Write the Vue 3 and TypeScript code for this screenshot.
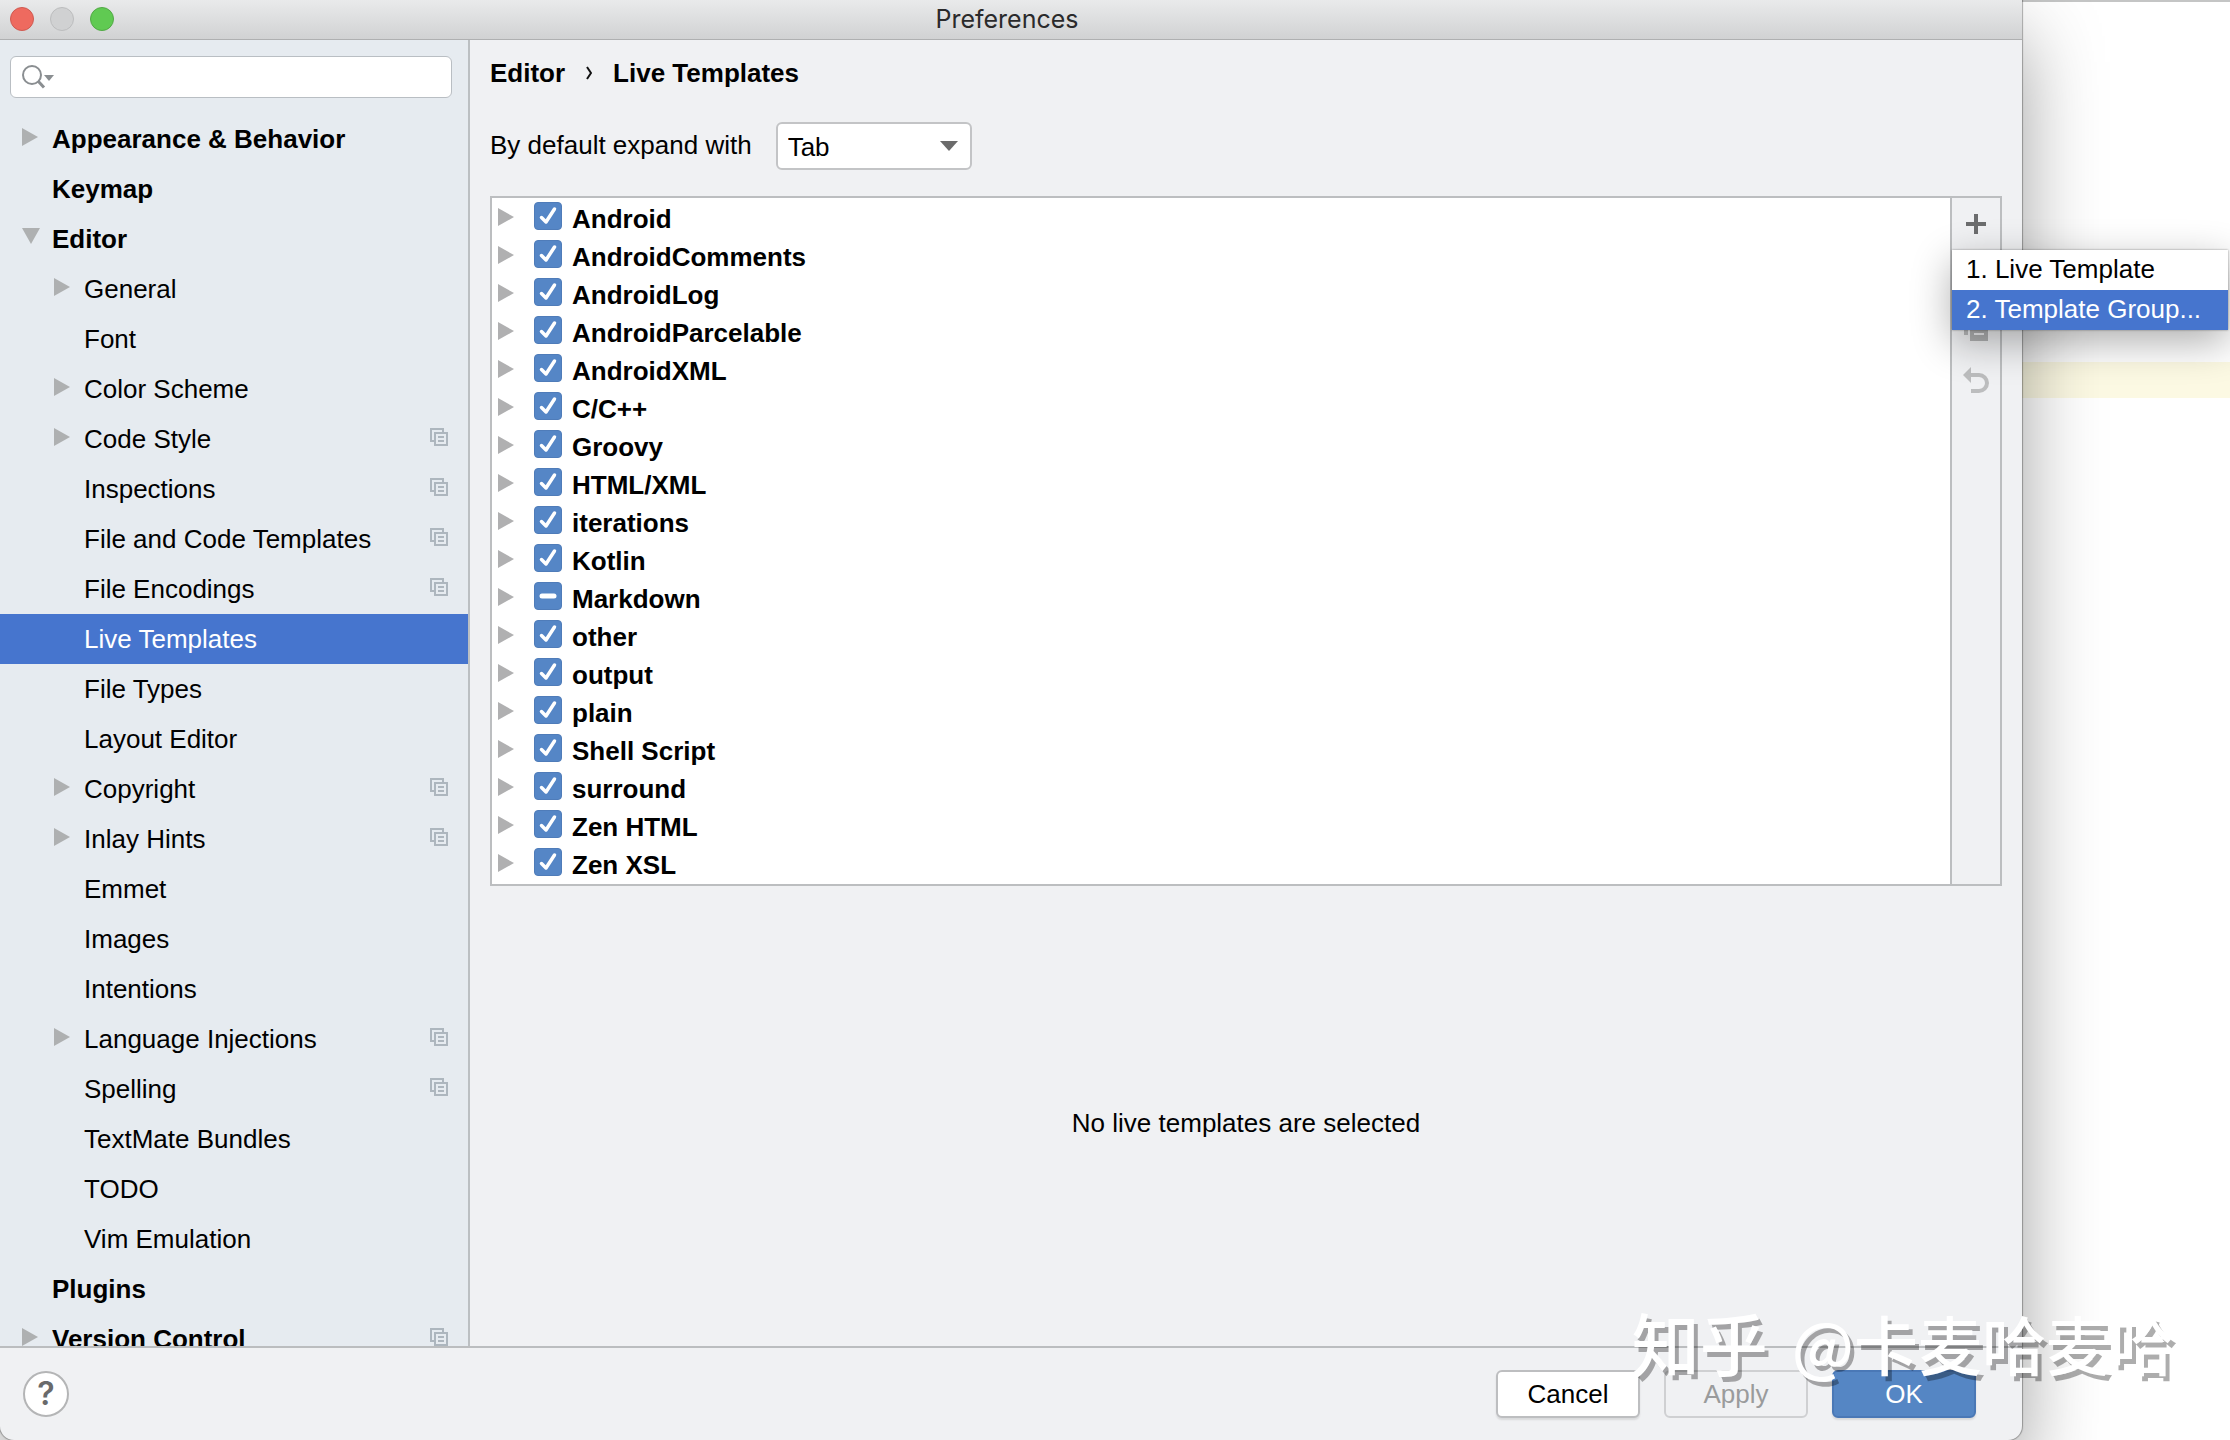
<script setup lang="ts">
import { ref } from 'vue'

interface NavItem {
  label: string
  depth: 0 | 1
  arrow?: 'right' | 'down'
  project?: boolean
}

interface TemplateGroup {
  name: string
  checked: boolean
  partial?: boolean
}

const navItems: NavItem[] = [
  { label: 'Appearance & Behavior', depth: 0, arrow: 'right' },
  { label: 'Keymap', depth: 0 },
  { label: 'Editor', depth: 0, arrow: 'down' },
  { label: 'General', depth: 1, arrow: 'right' },
  { label: 'Font', depth: 1 },
  { label: 'Color Scheme', depth: 1, arrow: 'right' },
  { label: 'Code Style', depth: 1, arrow: 'right', project: true },
  { label: 'Inspections', depth: 1, project: true },
  { label: 'File and Code Templates', depth: 1, project: true },
  { label: 'File Encodings', depth: 1, project: true },
  { label: 'Live Templates', depth: 1 },
  { label: 'File Types', depth: 1 },
  { label: 'Layout Editor', depth: 1 },
  { label: 'Copyright', depth: 1, arrow: 'right', project: true },
  { label: 'Inlay Hints', depth: 1, arrow: 'right', project: true },
  { label: 'Emmet', depth: 1 },
  { label: 'Images', depth: 1 },
  { label: 'Intentions', depth: 1 },
  { label: 'Language Injections', depth: 1, arrow: 'right', project: true },
  { label: 'Spelling', depth: 1, project: true },
  { label: 'TextMate Bundles', depth: 1 },
  { label: 'TODO', depth: 1 },
  { label: 'Vim Emulation', depth: 1 },
  { label: 'Plugins', depth: 0 },
  { label: 'Version Control', depth: 0, arrow: 'right', project: true },
]

const groups = ref<TemplateGroup[]>(
  [
    'Android', 'AndroidComments', 'AndroidLog', 'AndroidParcelable', 'AndroidXML', 'C/C++',
    'Groovy', 'HTML/XML', 'iterations', 'Kotlin', 'Markdown', 'other', 'output', 'plain',
    'Shell Script', 'surround', 'Zen HTML', 'Zen XSL',
  ].map((name) => ({ name, checked: name !== 'Markdown', partial: name === 'Markdown' })),
)

const menuItems = ['1. Live Template', '2. Template Group...']
const activeMenuItem = ref(1)
const selectedNav = ref('Live Templates')
const query = ref('')
const expandKey = ref('Tab')

function toggle(group: TemplateGroup): void {
  group.checked = !group.checked
  group.partial = false
}
</script>

<template>
  <div class="screen">
    <section class="dialog" aria-label="Preferences">
      <header class="titlebar">
        <div class="lights">
          <button class="light close" aria-label="Close"></button>
          <button class="light minimize" aria-label="Minimize" disabled></button>
          <button class="light zoom" aria-label="Zoom"></button>
        </div>
        <h1 class="title">Preferences</h1>
      </header>

      <div class="body">
        <aside class="sidebar">
          <label class="search">
            <svg width="32" height="24" viewBox="0 0 32 24" aria-hidden="true">
              <circle cx="10" cy="10" r="9" fill="none" stroke="#8a8e91" stroke-width="2" />
              <path d="M16 16l6 6.500" stroke="#8a8e91" stroke-width="3" />
              <path d="M22 10h10l-5 6z" fill="#8a8e91" />
            </svg>
            <input v-model="query" type="text" aria-label="Search settings" />
          </label>
          <nav class="nav">
            <a
              v-for="item in navItems"
              :key="item.label"
              href="#"
              class="nav-row"
              :class="{ child: item.depth === 1, selected: item.label === selectedNav }"
              @click.prevent="selectedNav = item.label"
            >
              <span class="nav-arrow">
                <svg v-if="item.arrow === 'right'" width="18" height="18" viewBox="0 0 18 18">
                  <path d="M0 0l16 9l-16 9z" fill="#aeb0b1" />
                </svg>
                <svg v-else-if="item.arrow === 'down'" width="18" height="18" viewBox="0 0 18 18">
                  <path d="M0 0h18l-9 16z" fill="#aeb0b1" />
                </svg>
              </span>
              <span class="nav-label">{{ item.label }}</span>
              <svg v-if="item.project" class="project" width="18" height="18" viewBox="0 0 18 18">
                <path
                  d="M4 13H1V1h12v3M5 5h12v12H5zM8 9h6M8 13h6"
                  fill="none"
                  stroke="#adb6be"
                  stroke-width="2"
                />
              </svg>
            </a>
          </nav>
        </aside>

        <main class="content">
          <div class="crumbs">
            <span>Editor</span>
            <svg width="6" height="14" viewBox="0 0 6 14" aria-hidden="true">
              <path d="M1 1l4 6l-4 6" fill="none" stroke="#111" stroke-width="2" />
            </svg>
            <span>Live Templates</span>
          </div>

          <div class="expand">
            <label for="expand-key">By default expand with</label>
            <div class="combo">
              <select id="expand-key" v-model="expandKey">
                <option>Tab</option>
                <option>Enter</option>
                <option>Space</option>
              </select>
              <svg width="18" height="10" viewBox="0 0 18 10" aria-hidden="true">
                <path d="M0 0h18l-9 10z" fill="#6b6b6b" />
              </svg>
            </div>
          </div>

          <div class="panel">
            <ul class="groups">
              <li v-for="group in groups" :key="group.name" class="group">
                <svg class="group-arrow" width="18" height="18" viewBox="0 0 18 18">
                  <path d="M0 0l16 9l-16 9z" fill="#b0b0b1" />
                </svg>
                <label class="group-label">
                  <span class="check">
                    <input
                      type="checkbox"
                      :checked="group.checked"
                      :indeterminate.prop="group.partial"
                      @change="toggle(group)"
                    />
                    <svg width="28" height="28" viewBox="0 0 28 28" aria-hidden="true">
                      <path
                        v-if="group.partial"
                        d="M8 14h12"
                        stroke="#fff"
                        stroke-width="5"
                        stroke-linecap="round"
                      />
                      <path
                        v-else-if="group.checked"
                        d="M7.500 15.500l4.500 4.500L20.500 7"
                        fill="none"
                        stroke="#fff"
                        stroke-width="3.500"
                        stroke-linecap="round"
                        stroke-linejoin="round"
                      />
                    </svg>
                  </span>
                  <span>{{ group.name }}</span>
                </label>
              </li>
            </ul>
            <div class="tools">
              <button class="tool" aria-label="Add">
                <svg width="26" height="26" viewBox="0 0 26 26">
                  <path d="M3 13h20M13 3v20" stroke="#6c6d6e" stroke-width="4" />
                </svg>
              </button>
              <button class="tool" aria-label="Remove" disabled></button>
              <button class="tool" aria-label="Duplicate" disabled>
                <svg width="26" height="26" viewBox="0 0 26 26">
                  <path d="M1 0h18v4H5v16H1z" fill="#b9babb" />
                  <path d="M7 6h18v20H7zM11 11v2h10v-2zM11 18v2h10v-2z" fill="#b1b2b3" fill-rule="evenodd" />
                </svg>
              </button>
              <button class="tool" aria-label="Revert" disabled>
                <svg width="26" height="26" viewBox="0 0 26 26">
                  <path d="M6 8h10a8 8 0 0 1 0 16H8" fill="none" stroke="#bcbdbe" stroke-width="4" />
                  <path d="M0 8l8-8v16z" fill="#bcbdbe" />
                </svg>
              </button>
              <div class="menu" role="menu">
                <button
                  v-for="(item, i) in menuItems"
                  :key="item"
                  role="menuitem"
                  class="menu-item"
                  :class="{ active: i === activeMenuItem }"
                  @mouseenter="activeMenuItem = i"
                >
                  {{ item }}
                </button>
              </div>
            </div>
          </div>

          <p class="empty">No live templates are selected</p>
        </main>
      </div>

      <footer class="footer">
        <button class="help" aria-label="Help">?</button>
        <div class="actions">
          <button class="btn">Cancel</button>
          <button class="btn" disabled>Apply</button>
          <button class="btn primary">OK</button>
        </div>
      </footer>
    </section>

    <div class="backdrop"><div class="caret-line"></div></div>
    <div class="watermark">
      <span class="watermark-site">知乎</span>
      <span>@卡麦哈麦哈</span>
    </div>
  </div>
</template>

<style>
body {
  margin: 0;
  overflow: hidden;
}
</style>

<style scoped>
.screen {
  position: relative;
  display: flex;
  height: 100vh;
  overflow: hidden;
  background: #fff;
  color: #000;
  font: 26px/38px "Liberation Sans", Arial, sans-serif;
}

button,
input,
select {
  font: inherit;
  color: inherit;
  margin: 0;
  padding: 0;
  border: 0;
  background: none;
  box-sizing: border-box;
}

svg {
  display: block;
  flex: none;
}

.dialog {
  position: relative;
  z-index: 1;
  flex: 1;
  min-width: 0;
  display: flex;
  flex-direction: column;
  background: #f0f1f3;
  border-radius: 0 0 14px 14px;
  box-shadow: 0 0 1px 1px rgba(0, 0, 0, 0.3), 0 36px 80px rgba(0, 0, 0, 0.38);
}

.titlebar {
  display: grid;
  grid-template-columns: 1fr auto 1fr;
  align-items: center;
  box-sizing: border-box;
  height: 40px;
  padding: 0 18px 2px 10px;
  border-bottom: 1px solid #afb0b1;
  background: linear-gradient(#e9eaeb, #d1d2d3);
}

.lights {
  display: flex;
  gap: 16px;
}

.light {
  width: 24px;
  height: 24px;
  border: 1px solid #bcbdbe;
  border-radius: 50%;
  background: #d0d1d2;
}

.close {
  background: #ee6a5f;
  border-color: #cf5a51;
}

.zoom {
  background: #60ca52;
  border-color: #52a946;
}

.title {
  margin: 0;
  font: 400 25px/36px Inter, sans-serif;
  color: #2a2a2b;
}

.body {
  flex: 1;
  min-height: 0;
  display: flex;
}

.sidebar {
  flex: none;
  width: 468px;
  display: flex;
  flex-direction: column;
  overflow: hidden;
  background: #e6ebf0;
  border-right: 2px solid #bbbfc2;
}

.search {
  flex: none;
  display: flex;
  align-items: center;
  gap: 8px;
  box-sizing: border-box;
  height: 42px;
  margin: 16px 16px 16px 10px;
  padding-left: 11px;
  border: 1px solid #b9bec3;
  border-radius: 6px;
  background: #fff;
}

.search input {
  flex: 1;
  min-width: 0;
  height: 38px;
  outline: 0;
}

.nav-row {
  display: flex;
  align-items: center;
  height: 50px;
  padding: 0 20px 0 22px;
  color: #000;
  font-weight: 700;
  text-decoration: none;
}

.nav-row.child {
  padding-left: 54px;
  font-weight: 400;
}

.nav-row.selected {
  background: #4675ce;
  color: #fff;
}

.nav-arrow {
  flex: none;
  width: 30px;
  padding-bottom: 4px;
}

.nav-label {
  flex: 1;
}

.project {
  padding-bottom: 4px;
}

.content {
  flex: 1;
  min-width: 0;
  display: flex;
  flex-direction: column;
  padding: 14px 20px 0;
}

.crumbs {
  display: flex;
  align-items: center;
  gap: 21px;
  font-weight: 700;
}

.expand {
  display: flex;
  align-items: center;
  gap: 24px;
  margin: 30px 0 26px;
}

.expand label {
  padding-bottom: 2px;
}

.combo {
  display: grid;
  align-items: center;
  width: 196px;
}

.combo > * {
  grid-area: 1 / 1;
}

.combo select {
  appearance: none;
  height: 48px;
  padding: 2px 10px 0;
  border: 2px solid #c3c4c6;
  border-radius: 6px;
  background: #fff;
}

.combo svg {
  justify-self: end;
  margin-right: 14px;
  pointer-events: none;
}

.panel {
  display: flex;
  border: 2px solid #bcbec0;
}

.groups {
  flex: 1;
  margin: 0;
  padding: 2px 0 0;
  list-style: none;
  background: #fff;
}

.group {
  display: flex;
  align-items: center;
  height: 38px;
  padding-left: 6px;
  font-weight: 700;
}

.group-arrow {
  padding-bottom: 4px;
}

.group-label {
  display: flex;
  align-items: center;
  gap: 10px;
  margin-left: 18px;
}

.check {
  display: grid;
  padding-bottom: 6px;
}

.check > * {
  grid-area: 1 / 1;
}

.check input {
  appearance: none;
  width: 28px;
  height: 28px;
  border: 1px solid #4f7cb9;
  border-radius: 4px;
  background: #5586c6;
}

.check svg {
  pointer-events: none;
}

.tools {
  position: relative;
  flex: none;
  display: flex;
  flex-direction: column;
  align-items: center;
  width: 48px;
  border-left: 2px solid #bcbec0;
}

.tool {
  display: grid;
  place-items: center;
  width: 48px;
  height: 52px;
}

.menu {
  position: absolute;
  top: 52px;
  left: 0;
  width: 276px;
  background: #fff;
  box-shadow: 0 0 2px rgba(0, 0, 0, 0.4), 0 12px 40px rgba(0, 0, 0, 0.32);
}

.menu-item {
  display: block;
  width: 100%;
  height: 40px;
  padding: 0 0 2px 14px;
  text-align: left;
  white-space: nowrap;
}

.menu-item.active {
  background: #4675ce;
  color: #fff;
}

.empty {
  flex: 1;
  display: grid;
  place-items: center;
  margin: 0;
  padding-top: 14px;
}

.footer {
  flex: none;
  display: flex;
  align-items: center;
  justify-content: space-between;
  box-sizing: border-box;
  height: 94px;
  padding: 0 46px 0 23px;
  border-top: 2px solid #bbbdbf;
}

.help {
  width: 46px;
  height: 46px;
  border: 2px solid #b4b5b6;
  border-radius: 50%;
  background: #fff;
  color: #696a6b;
  font: 600 32px/42px Inter, sans-serif;
}

.actions {
  display: flex;
  gap: 24px;
}

.btn {
  width: 144px;
  height: 48px;
  border: 2px solid #bdbec0;
  border-radius: 6px;
  background: #fff;
  box-shadow: 0 2px 2px rgba(0, 0, 0, 0.1);
}

.btn:disabled {
  border-color: #cfd0d2;
  background: none;
  box-shadow: none;
  color: #9a9b9c;
}

.btn.primary {
  border-color: #4a78b6;
  background: #5586c4;
  color: #fff;
}

.backdrop {
  flex: none;
  width: 208px;
  box-sizing: border-box;
  padding-top: 360px;
  border-top: 2px solid #c4c5c5;
}

.caret-line {
  height: 36px;
  background: #fcf9e3;
}

.watermark {
  position: absolute;
  z-index: 2;
  right: 56px;
  bottom: 66px;
  display: flex;
  align-items: center;
  gap: 24px;
  color: #fff;
  font: 500 64px/64px "Noto Sans CJK SC", sans-serif;
  text-shadow: 4px 5px 0 rgba(0, 0, 0, 0.32);
  white-space: nowrap;
  pointer-events: none;
}

.watermark-site {
  font-size: 68px;
}
</style>
